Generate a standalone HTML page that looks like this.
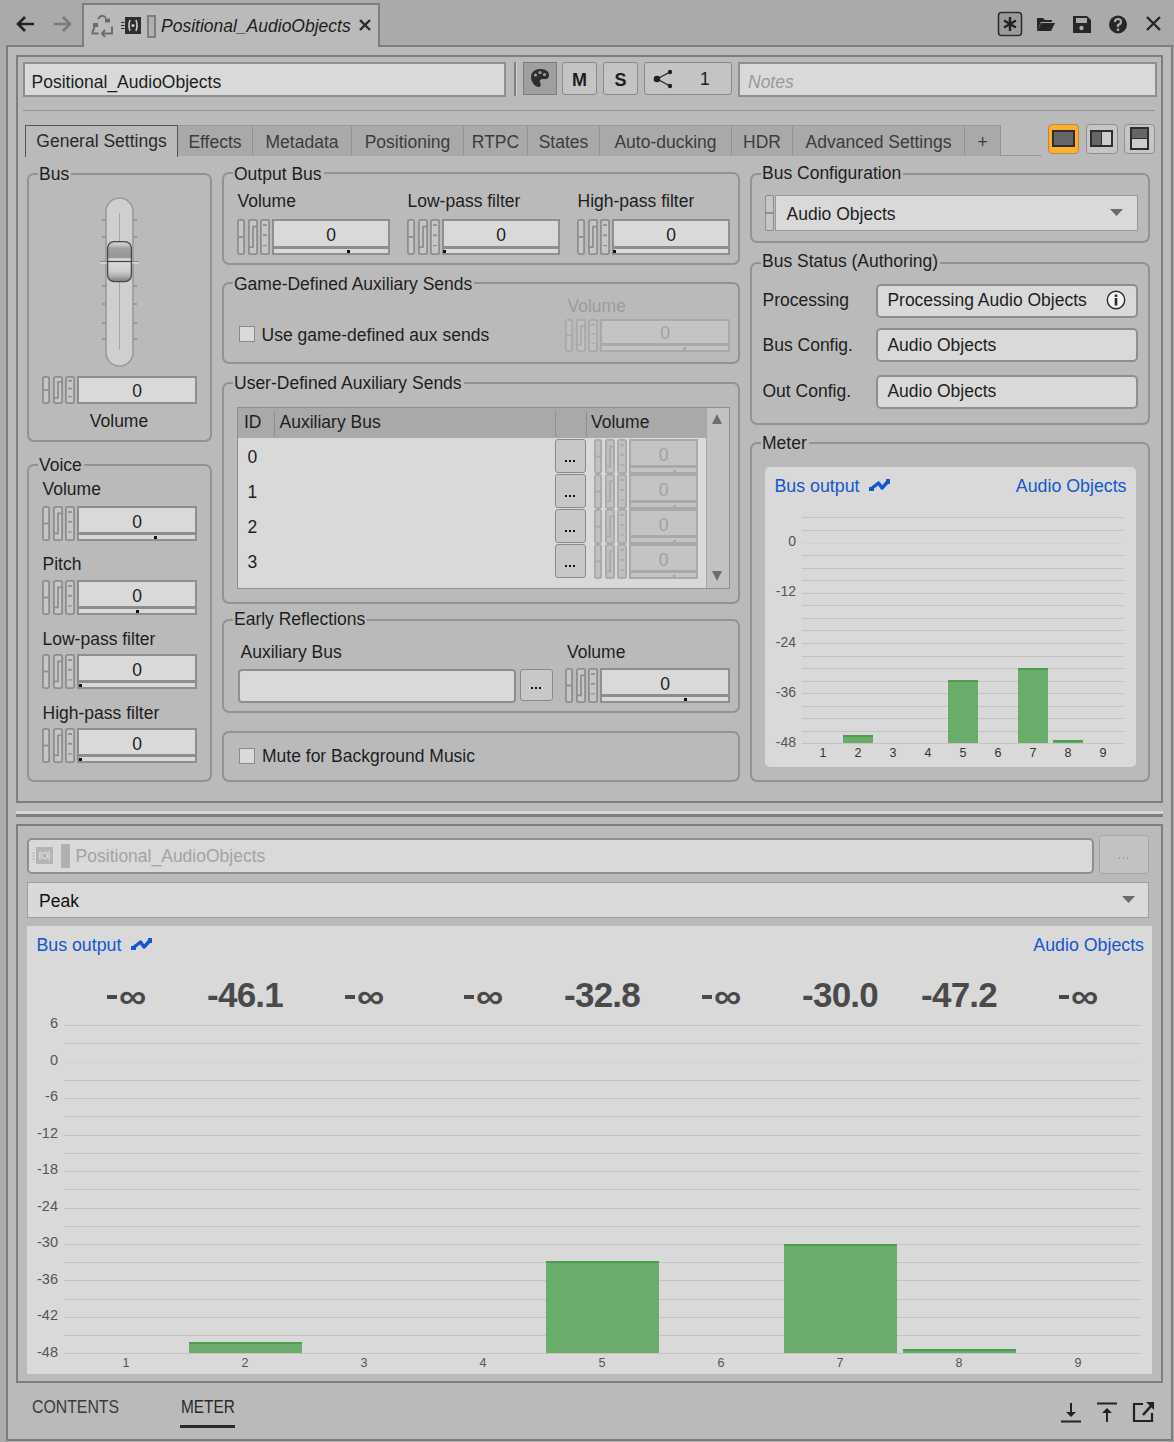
<!DOCTYPE html><html><head><meta charset="utf-8"><style>
*{box-sizing:border-box;margin:0;padding:0}
html,body{width:1174px;height:1442px;overflow:hidden;background:#acacac;font-family:"Liberation Sans",sans-serif;color:#1e1e1e;font-size:17.5px}
.a{position:absolute}
.t{position:absolute;white-space:nowrap;line-height:1}
.pn{position:absolute;background:#bababa;border:2px solid #7e7e7e}
.grp{position:absolute;border:2px solid #929292;border-radius:7px}
.gt{position:absolute;white-space:nowrap;line-height:1;background:#bababa;padding:0 2px 0 1px}
.inp{position:absolute;background:#d9d9d9;border:2px solid #8e8e8e}
.tab{position:absolute;top:125px;height:31px;background:#a9a9a9;border-right:1px solid #939393;border-top:1px solid #9a9a9a}
.tab span{position:absolute;top:8px;left:0;right:0;text-align:center;white-space:nowrap;line-height:1;color:#3c3c3c}
</style></head><body>
<div class="a" style="left:0px;top:0px;width:1174px;height:46px;background:#aaaaaa"></div>
<div class="pn" style="left:6px;top:45px;width:1167px;height:1396px"></div>
<div class="a" style="left:82px;top:3px;width:298px;height:44px;background:#bababa;border:2px solid #7e7e7e;border-bottom:none"></div>
<div class="pn" style="left:16px;top:55px;width:1147px;height:748px"></div>
<div class="a" style="left:16px;top:811px;width:1147px;height:3px;background:#d6d6d6"></div>
<div class="a" style="left:16px;top:814px;width:1147px;height:3px;background:#7e7e7e"></div>
<div class="pn" style="left:16px;top:824px;width:1147px;height:559px"></div>
<div class="a" style="left:23px;top:62px;width:483px;height:35px;background:#d9d9d9;border:2px solid #8e8e8e"></div>
<div class="t" style="left:31.5px;top:73.89px;font-size:17.5px;">Positional_AudioObjects</div>
<div class="a" style="left:738px;top:62px;width:419px;height:35px;background:#d9d9d9;border:2px solid #8e8e8e"></div>
<div class="t" style="left:748px;top:73.89px;font-size:17.5px;color:#9a9a9a;font-style:italic">Notes</div>
<div class="a" style="left:23px;top:110px;width:1132px;height:1px;background:#939393"></div>
<div class="grp" style="left:27px;top:173px;width:185px;height:269px"></div>
<div class="gt" style="left:38px;top:165.69px;font-size:17.5px">Bus</div>
<div class="grp" style="left:27px;top:464px;width:185px;height:318px"></div>
<div class="gt" style="left:38px;top:456.79px;font-size:17.5px">Voice</div>
<div class="grp" style="left:222px;top:172px;width:518px;height:93px"></div>
<div class="gt" style="left:233px;top:165.69px;font-size:17.5px">Output Bus</div>
<div class="grp" style="left:222px;top:282px;width:518px;height:82px"></div>
<div class="gt" style="left:233px;top:276.19px;font-size:17.5px">Game-Defined Auxiliary Sends</div>
<div class="grp" style="left:222px;top:382px;width:518px;height:222px"></div>
<div class="gt" style="left:233px;top:374.59px;font-size:17.5px">User-Defined Auxiliary Sends</div>
<div class="grp" style="left:222px;top:619px;width:518px;height:94px"></div>
<div class="gt" style="left:233px;top:610.99px;font-size:17.5px">Early Reflections</div>
<div class="grp" style="left:222px;top:731px;width:518px;height:51px"></div>
<div class="grp" style="left:750px;top:173px;width:400px;height:70px"></div>
<div class="gt" style="left:761px;top:165.49px;font-size:17.5px">Bus Configuration</div>
<div class="grp" style="left:750px;top:262px;width:400px;height:163px"></div>
<div class="gt" style="left:761px;top:253.39px;font-size:17.5px">Bus Status (Authoring)</div>
<div class="grp" style="left:750px;top:442px;width:400px;height:340px"></div>
<div class="gt" style="left:761px;top:435.19px;font-size:17.5px">Meter</div>
<svg class="a" style="left:14px;top:12px" width="24" height="24" viewBox="0 0 24 24"><path d="M4 12 H20 M11 5 L4 12 L11 19" fill="none" stroke="#222" stroke-width="2.6"/></svg>
<svg class="a" style="left:50px;top:12px" width="24" height="24" viewBox="0 0 24 24"><path d="M4 12 H20 M13 5 L20 12 L13 19" fill="none" stroke="#7a7a7a" stroke-width="2.6"/></svg>
<svg class="a" style="left:86px;top:8px" width="32" height="32" viewBox="0 0 32 32"><g fill="none" stroke="#6c6c6c" stroke-width="2"><path d="M12 11 Q16 5 20 10"/><path d="M8.5 19 L6.5 24 V25.5 H12.5"/><path d="M26 18.5 V25.5 H17"/><path d="M19 22 L16 25.5 L19 29"/></g><g fill="#6c6c6c"><rect x="19" y="10.5" width="5" height="4"/><rect x="7" y="15" width="5" height="4"/></g></svg>
<svg class="a" style="left:121px;top:16px" width="22" height="19" viewBox="0 0 22 19"><rect x="4" y="1" width="16" height="17" fill="#2e2e2e"/><path d="M9 4 Q7 9.5 9 15 M15 4 Q17 9.5 15 15" fill="none" stroke="#c8c8c8" stroke-width="1.6"/><circle cx="12" cy="9.5" r="1.6" fill="#c8c8c8"/><path d="M0 6.5H3.5M0 9.5H3.5M0 12.5H3.5" stroke="#2e2e2e" stroke-width="1.2"/></svg>
<div class="a" style="left:147px;top:15px;width:9px;height:23px;background:#b0b0b0;border:2px solid #7e7e7e"></div>
<div class="t" style="left:161px;top:17.69px;font-size:17.5px;font-style:italic">Positional_AudioObjects</div>
<svg class="a" style="left:358px;top:18px" width="14" height="14" viewBox="0 0 14 14"><path d="M2 2 L12 12 M12 2 L2 12" stroke="#2a2a2a" stroke-width="2.4"/></svg>
<svg class="a" style="left:997px;top:11px" width="26" height="26" viewBox="0 0 26 26"><rect x="1.5" y="1.5" width="23" height="23" rx="3" fill="#9b9b9b" stroke="#2e2e2e" stroke-width="1.6"/><path d="M13 6 V20 M7 9.5 L19 16.5 M19 9.5 L7 16.5" stroke="#222" stroke-width="2.4"/></svg>
<svg class="a" style="left:1036px;top:16px" width="20" height="16" viewBox="0 0 20 16"><path d="M1 2 H7 L9 4 H16 V6 H5 L1 15 Z" fill="#262626"/><path d="M5 7 H19 L15 15 H1 Z" fill="#262626"/></svg>
<svg class="a" style="left:1072px;top:15px" width="20" height="19" viewBox="0 0 20 19"><path d="M1 1 H15 L19 5 V18 H1 Z" fill="#262626"/><rect x="4" y="3" width="11" height="5" fill="#aaaaaa"/><circle cx="9.5" cy="13" r="2.2" fill="#aaaaaa"/></svg>
<svg class="a" style="left:1108px;top:15px" width="20" height="19" viewBox="0 0 20 19"><circle cx="10" cy="9.5" r="9" fill="#262626"/><path d="M7 7 Q7 4 10 4 Q13 4 13 7 Q13 9 10 10 V12" fill="none" stroke="#aaa" stroke-width="2.2"/><rect x="8.8" y="13.5" width="2.4" height="2.4" fill="#aaa"/></svg>
<svg class="a" style="left:1145px;top:15px" width="17" height="17" viewBox="0 0 17 17"><path d="M2 2 L15 15 M15 2 L2 15" stroke="#262626" stroke-width="2.4"/></svg>
<div class="a" style="left:514px;top:62px;width:2px;height:34px;background:#7e7e7e"></div>
<div class="a" style="left:516px;top:62px;width:1px;height:34px;background:#d0d0d0"></div>
<div class="a" style="left:523px;top:62px;width:34px;height:33px;background:#9f9f9f;border:1px solid #7b7b7b"></div>
<svg class="a" style="left:529px;top:67px" width="22" height="22" viewBox="0 0 22 22"><path d="M11 2 C5 2 2 6 2 10 C2 15 6 20 10 20 C12 20 12 17 11 15 C10 13 12 12 14 12 H17 C19 12 20 10 20 8 C20 4 16 2 11 2 Z" fill="#2e2e2e"/><circle cx="6.5" cy="8" r="1.6" fill="#9f9f9f"/><circle cx="11" cy="5.5" r="1.6" fill="#9f9f9f"/><circle cx="15.5" cy="7.5" r="1.6" fill="#9f9f9f"/></svg>
<div class="a" style="left:562px;top:62px;width:35px;height:33px;background:#c4c4c4;border:1px solid #8a8a8a;border-radius:3px"></div>
<div class="t" style="left:562px;width:35px;text-align:center;top:71px;font-size:18px;font-weight:bold;color:#1e1e1e">M</div>
<div class="a" style="left:603px;top:62px;width:35px;height:33px;background:#c4c4c4;border:1px solid #8a8a8a;border-radius:3px"></div>
<div class="t" style="left:603px;width:35px;text-align:center;top:71px;font-size:18px;font-weight:bold;color:#1e1e1e">S</div>
<div class="a" style="left:644px;top:62px;width:88px;height:33px;background:#c4c4c4;border:1px solid #8a8a8a;border-radius:3px"></div>
<svg class="a" style="left:652px;top:68px" width="24" height="22" viewBox="0 0 24 22"><circle cx="5" cy="11" r="3.3" fill="#222"/><circle cx="18" cy="4" r="2.2" fill="#222"/><circle cx="18" cy="18" r="2.2" fill="#222"/><path d="M5 11 L18 4 M5 11 L18 18" stroke="#222" stroke-width="1.3"/></svg>
<div class="t" style="left:700px;top:70.69px;font-size:17.5px;">1</div>
<div class="a" style="left:25px;top:155px;width:1017px;height:1px;background:#9a9a9a"></div>
<div class="tab" style="left:178px;width:75px"><span>Effects</span></div>
<div class="tab" style="left:253px;width:99px"><span>Metadata</span></div>
<div class="tab" style="left:352px;width:112px"><span>Positioning</span></div>
<div class="tab" style="left:464px;width:64px"><span>RTPC</span></div>
<div class="tab" style="left:528px;width:72px"><span>States</span></div>
<div class="tab" style="left:600px;width:132px"><span>Auto-ducking</span></div>
<div class="tab" style="left:732px;width:61px"><span>HDR</span></div>
<div class="tab" style="left:793px;width:172px"><span>Advanced Settings</span></div>
<div class="tab" style="left:965px;width:36px"><span>+</span></div>
<div class="a" style="left:25px;top:125px;width:153px;height:32px;background:#bababa;border:1px solid #555;border-bottom:none"></div>
<div class="t" style="left:-98.5px;width:400px;text-align:center;top:133.19px;font-size:17.5px;color:#2a2a2a;">General Settings</div>
<div class="a" style="left:1048px;top:124px;width:31px;height:30px;background:#fbb034;border:1px solid #b98a3a;border-radius:4px"></div>
<div class="a" style="left:1052px;top:130px;width:23px;height:17px;background:#666;border:2px solid #2e2e2e"></div>
<div class="a" style="left:1086px;top:124px;width:32px;height:30px;background:#c6c6c6;border:1px solid #8e8e8e;border-radius:4px"></div>
<div class="a" style="left:1090px;top:130px;width:23px;height:17px;background:#cdcdcd;border:2px solid #2e2e2e"></div>
<div class="a" style="left:1092px;top:132px;width:10px;height:13px;background:#666"></div>
<div class="a" style="left:1101px;top:132px;width:1px;height:13px;background:#2e2e2e"></div>
<div class="a" style="left:1124px;top:124px;width:31px;height:30px;background:#c6c6c6;border:1px solid #8e8e8e;border-radius:4px"></div>
<div class="a" style="left:1130px;top:127px;width:19px;height:23px;background:#cdcdcd;border:2px solid #2e2e2e"></div>
<div class="a" style="left:1132px;top:129px;width:15px;height:9.5px;background:#666"></div>
<div class="a" style="left:1132px;top:138px;width:15px;height:1.2px;background:#2e2e2e"></div>
<svg class="a" style="left:98px;top:196px" width="44" height="174" viewBox="0 0 44 174"><g stroke="#8e8e8e" stroke-width="1.5"><line x1="4" y1="24" x2="8" y2="24"/><line x1="35" y1="24" x2="39" y2="24"/><line x1="4" y1="41" x2="8" y2="41"/><line x1="35" y1="41" x2="39" y2="41"/><line x1="4" y1="90" x2="8" y2="90"/><line x1="35" y1="90" x2="39" y2="90"/><line x1="4" y1="108" x2="8" y2="108"/><line x1="35" y1="108" x2="39" y2="108"/><line x1="4" y1="127" x2="8" y2="127"/><line x1="35" y1="127" x2="39" y2="127"/><line x1="4" y1="143" x2="8" y2="143"/><line x1="35" y1="143" x2="39" y2="143"/></g><rect x="8" y="2" width="27" height="168" rx="13.5" fill="#cfcfcf" stroke="#9a9a9a" stroke-width="1.6"/><line x1="21.5" y1="17" x2="21.5" y2="154" stroke="#a6a6a6" stroke-width="1"/><defs><linearGradient id="tt" gradientUnits="userSpaceOnUse" x1="0" y1="45.6" x2="0" y2="65.5"><stop offset="0" stop-color="#d2d2d2"/><stop offset="0.18" stop-color="#c4c4c4"/><stop offset="0.32" stop-color="#a2a2a2"/><stop offset="0.8" stop-color="#969696"/><stop offset="0.86" stop-color="#d6d6d6"/><stop offset="1" stop-color="#d6d6d6"/></linearGradient><linearGradient id="tb" gradientUnits="userSpaceOnUse" x1="0" y1="65.5" x2="0" y2="85.6"><stop offset="0" stop-color="#dadada"/><stop offset="0.5" stop-color="#cdcdcd"/><stop offset="0.78" stop-color="#a6a6a6"/><stop offset="1" stop-color="#7a7a7a"/></linearGradient><clipPath id="ct"><rect x="0" y="0" width="44" height="65.5"/></clipPath><clipPath id="cb"><rect x="0" y="65.5" width="44" height="40"/></clipPath></defs><line x1="2" y1="67" x2="41" y2="67" stroke="#ededed" stroke-width="1.2"/><line x1="2" y1="65.5" x2="41" y2="65.5" stroke="#8a8a8a" stroke-width="1.2"/><rect x="9.6" y="45.6" width="23.8" height="40" rx="6.5" fill="url(#tt)" clip-path="url(#ct)"/><rect x="9.6" y="45.6" width="23.8" height="40" rx="6.5" fill="url(#tb)" clip-path="url(#cb)"/><rect x="9.6" y="45.6" width="23.8" height="40" rx="6.5" fill="none" stroke="#4a4a4a" stroke-width="1.3"/><line x1="10" y1="65.5" x2="33" y2="65.5" stroke="#444" stroke-width="1.2"/></svg>
<svg class="a" style="left:42px;top:376px" width="34" height="28" viewBox="0 0 34 28"><rect x="0.9" y="0.9" width="6.2" height="26.2" rx="1.8" fill="#c6c6c6" stroke="#8e8e8e" stroke-width="1.8"/><line x1="1" y1="14.0" x2="7" y2="14.0" stroke="#8e8e8e" stroke-width="1.8"/><rect x="11.9" y="0.9" width="8.2" height="26.2" rx="1.8" fill="#c6c6c6" stroke="#8e8e8e" stroke-width="1.8"/><path d="M12 21.8 H16 V5.9 H20" fill="none" stroke="#8e8e8e" stroke-width="1.8"/><rect x="23.9" y="0.9" width="8.2" height="26.2" rx="1.8" fill="#c6c6c6" stroke="#8e8e8e" stroke-width="1.8"/><line x1="26" y1="4.8" x2="30" y2="4.8" stroke="#8e8e8e" stroke-width="1.8"/><line x1="26" y1="12.6" x2="30" y2="12.6" stroke="#8e8e8e" stroke-width="1.8"/><line x1="26" y1="20.7" x2="30" y2="20.7" stroke="#8e8e8e" stroke-width="1.2"/></svg>
<div class="a" style="left:77px;top:376px;width:120px;height:28px;background:#8e8e8e"></div>
<div class="a" style="left:79px;top:378px;width:116px;height:17px;background:#d9d9d9"></div>
<div class="a" style="left:79px;top:398px;width:116px;height:4px;background:#d9d9d9"></div>
<div class="t" style="left:-63.0px;width:400px;text-align:center;top:379.41px;font-size:17.5px;color:#1e1e1e;">0</div>
<div class="a" style="left:77px;top:376px;width:120px;height:28px;background:#d9d9d9;border:2px solid #8e8e8e"></div>
<div class="t" style="left:-63px;width:400px;text-align:center;top:383.19px;font-size:17.5px;">0</div>
<div class="t" style="left:-81px;width:400px;text-align:center;top:413.19px;font-size:17.5px;">Volume</div>
<div class="t" style="left:42.5px;top:481.49px;font-size:17.5px;">Volume</div>
<svg class="a" style="left:42px;top:506px" width="34" height="35" viewBox="0 0 34 35"><rect x="0.9" y="0.9" width="6.2" height="33.2" rx="1.8" fill="#c6c6c6" stroke="#8e8e8e" stroke-width="1.8"/><line x1="1" y1="17.5" x2="7" y2="17.5" stroke="#8e8e8e" stroke-width="1.8"/><rect x="11.9" y="0.9" width="8.2" height="33.2" rx="1.8" fill="#c6c6c6" stroke="#8e8e8e" stroke-width="1.8"/><path d="M12 27.3 H16 V7.3 H20" fill="none" stroke="#8e8e8e" stroke-width="1.8"/><rect x="23.9" y="0.9" width="8.2" height="33.2" rx="1.8" fill="#c6c6c6" stroke="#8e8e8e" stroke-width="1.8"/><line x1="26" y1="6.0" x2="30" y2="6.0" stroke="#8e8e8e" stroke-width="1.8"/><line x1="26" y1="15.8" x2="30" y2="15.8" stroke="#8e8e8e" stroke-width="1.8"/><line x1="26" y1="25.9" x2="30" y2="25.9" stroke="#8e8e8e" stroke-width="1.2"/></svg>
<div class="a" style="left:77px;top:506px;width:120px;height:35px;background:#8e8e8e"></div>
<div class="a" style="left:79px;top:508px;width:116px;height:24px;background:#d9d9d9"></div>
<div class="a" style="left:79px;top:535px;width:116px;height:4px;background:#d9d9d9"></div>
<div class="a" style="left:154px;top:536px;width:3px;height:3px;background:#111"></div>
<div class="t" style="left:-63.0px;width:400px;text-align:center;top:513.71px;font-size:17.5px;color:#1e1e1e;">0</div>
<div class="t" style="left:42.5px;top:555.59px;font-size:17.5px;">Pitch</div>
<svg class="a" style="left:42px;top:580px" width="34" height="35" viewBox="0 0 34 35"><rect x="0.9" y="0.9" width="6.2" height="33.2" rx="1.8" fill="#c6c6c6" stroke="#8e8e8e" stroke-width="1.8"/><line x1="1" y1="17.5" x2="7" y2="17.5" stroke="#8e8e8e" stroke-width="1.8"/><rect x="11.9" y="0.9" width="8.2" height="33.2" rx="1.8" fill="#c6c6c6" stroke="#8e8e8e" stroke-width="1.8"/><path d="M12 27.3 H16 V7.3 H20" fill="none" stroke="#8e8e8e" stroke-width="1.8"/><rect x="23.9" y="0.9" width="8.2" height="33.2" rx="1.8" fill="#c6c6c6" stroke="#8e8e8e" stroke-width="1.8"/><line x1="26" y1="6.0" x2="30" y2="6.0" stroke="#8e8e8e" stroke-width="1.8"/><line x1="26" y1="15.8" x2="30" y2="15.8" stroke="#8e8e8e" stroke-width="1.8"/><line x1="26" y1="25.9" x2="30" y2="25.9" stroke="#8e8e8e" stroke-width="1.2"/></svg>
<div class="a" style="left:77px;top:580px;width:120px;height:35px;background:#8e8e8e"></div>
<div class="a" style="left:79px;top:582px;width:116px;height:24px;background:#d9d9d9"></div>
<div class="a" style="left:79px;top:609px;width:116px;height:4px;background:#d9d9d9"></div>
<div class="a" style="left:136px;top:610px;width:3px;height:3px;background:#111"></div>
<div class="t" style="left:-63.0px;width:400px;text-align:center;top:587.71px;font-size:17.5px;color:#1e1e1e;">0</div>
<div class="t" style="left:42.5px;top:630.89px;font-size:17.5px;">Low-pass filter</div>
<svg class="a" style="left:42px;top:654px" width="34" height="35" viewBox="0 0 34 35"><rect x="0.9" y="0.9" width="6.2" height="33.2" rx="1.8" fill="#c6c6c6" stroke="#8e8e8e" stroke-width="1.8"/><line x1="1" y1="17.5" x2="7" y2="17.5" stroke="#8e8e8e" stroke-width="1.8"/><rect x="11.9" y="0.9" width="8.2" height="33.2" rx="1.8" fill="#c6c6c6" stroke="#8e8e8e" stroke-width="1.8"/><path d="M12 27.3 H16 V7.3 H20" fill="none" stroke="#8e8e8e" stroke-width="1.8"/><rect x="23.9" y="0.9" width="8.2" height="33.2" rx="1.8" fill="#c6c6c6" stroke="#8e8e8e" stroke-width="1.8"/><line x1="26" y1="6.0" x2="30" y2="6.0" stroke="#8e8e8e" stroke-width="1.8"/><line x1="26" y1="15.8" x2="30" y2="15.8" stroke="#8e8e8e" stroke-width="1.8"/><line x1="26" y1="25.9" x2="30" y2="25.9" stroke="#8e8e8e" stroke-width="1.2"/></svg>
<div class="a" style="left:77px;top:654px;width:120px;height:35px;background:#8e8e8e"></div>
<div class="a" style="left:79px;top:656px;width:116px;height:24px;background:#d9d9d9"></div>
<div class="a" style="left:79px;top:683px;width:116px;height:4px;background:#d9d9d9"></div>
<div class="a" style="left:79px;top:684px;width:3px;height:3px;background:#111"></div>
<div class="t" style="left:-63.0px;width:400px;text-align:center;top:661.71px;font-size:17.5px;color:#1e1e1e;">0</div>
<div class="t" style="left:42.5px;top:704.69px;font-size:17.5px;">High-pass filter</div>
<svg class="a" style="left:42px;top:728px" width="34" height="35" viewBox="0 0 34 35"><rect x="0.9" y="0.9" width="6.2" height="33.2" rx="1.8" fill="#c6c6c6" stroke="#8e8e8e" stroke-width="1.8"/><line x1="1" y1="17.5" x2="7" y2="17.5" stroke="#8e8e8e" stroke-width="1.8"/><rect x="11.9" y="0.9" width="8.2" height="33.2" rx="1.8" fill="#c6c6c6" stroke="#8e8e8e" stroke-width="1.8"/><path d="M12 27.3 H16 V7.3 H20" fill="none" stroke="#8e8e8e" stroke-width="1.8"/><rect x="23.9" y="0.9" width="8.2" height="33.2" rx="1.8" fill="#c6c6c6" stroke="#8e8e8e" stroke-width="1.8"/><line x1="26" y1="6.0" x2="30" y2="6.0" stroke="#8e8e8e" stroke-width="1.8"/><line x1="26" y1="15.8" x2="30" y2="15.8" stroke="#8e8e8e" stroke-width="1.8"/><line x1="26" y1="25.9" x2="30" y2="25.9" stroke="#8e8e8e" stroke-width="1.2"/></svg>
<div class="a" style="left:77px;top:728px;width:120px;height:35px;background:#8e8e8e"></div>
<div class="a" style="left:79px;top:730px;width:116px;height:24px;background:#d9d9d9"></div>
<div class="a" style="left:79px;top:757px;width:116px;height:4px;background:#d9d9d9"></div>
<div class="a" style="left:79px;top:758px;width:3px;height:3px;background:#111"></div>
<div class="t" style="left:-63.0px;width:400px;text-align:center;top:735.71px;font-size:17.5px;color:#1e1e1e;">0</div>
<div class="t" style="left:237.5px;top:192.69px;font-size:17.5px;">Volume</div>
<svg class="a" style="left:237px;top:219px" width="34" height="36" viewBox="0 0 34 36"><rect x="0.9" y="0.9" width="6.2" height="34.2" rx="1.8" fill="#c6c6c6" stroke="#8e8e8e" stroke-width="1.8"/><line x1="1" y1="18.0" x2="7" y2="18.0" stroke="#8e8e8e" stroke-width="1.8"/><rect x="11.9" y="0.9" width="8.2" height="34.2" rx="1.8" fill="#c6c6c6" stroke="#8e8e8e" stroke-width="1.8"/><path d="M12 28.1 H16 V7.6 H20" fill="none" stroke="#8e8e8e" stroke-width="1.8"/><rect x="23.9" y="0.9" width="8.2" height="34.2" rx="1.8" fill="#c6c6c6" stroke="#8e8e8e" stroke-width="1.8"/><line x1="26" y1="6.1" x2="30" y2="6.1" stroke="#8e8e8e" stroke-width="1.8"/><line x1="26" y1="16.2" x2="30" y2="16.2" stroke="#8e8e8e" stroke-width="1.8"/><line x1="26" y1="26.6" x2="30" y2="26.6" stroke="#8e8e8e" stroke-width="1.2"/></svg>
<div class="a" style="left:272px;top:219px;width:118px;height:36px;background:#8e8e8e"></div>
<div class="a" style="left:274px;top:221px;width:114px;height:25px;background:#d9d9d9"></div>
<div class="a" style="left:274px;top:249px;width:114px;height:4px;background:#d9d9d9"></div>
<div class="a" style="left:347px;top:250px;width:3px;height:3px;background:#111"></div>
<div class="t" style="left:131.0px;width:400px;text-align:center;top:227.33px;font-size:17.5px;color:#1e1e1e;">0</div>
<div class="t" style="left:407.5px;top:192.69px;font-size:17.5px;">Low-pass filter</div>
<svg class="a" style="left:407px;top:219px" width="34" height="36" viewBox="0 0 34 36"><rect x="0.9" y="0.9" width="6.2" height="34.2" rx="1.8" fill="#c6c6c6" stroke="#8e8e8e" stroke-width="1.8"/><line x1="1" y1="18.0" x2="7" y2="18.0" stroke="#8e8e8e" stroke-width="1.8"/><rect x="11.9" y="0.9" width="8.2" height="34.2" rx="1.8" fill="#c6c6c6" stroke="#8e8e8e" stroke-width="1.8"/><path d="M12 28.1 H16 V7.6 H20" fill="none" stroke="#8e8e8e" stroke-width="1.8"/><rect x="23.9" y="0.9" width="8.2" height="34.2" rx="1.8" fill="#c6c6c6" stroke="#8e8e8e" stroke-width="1.8"/><line x1="26" y1="6.1" x2="30" y2="6.1" stroke="#8e8e8e" stroke-width="1.8"/><line x1="26" y1="16.2" x2="30" y2="16.2" stroke="#8e8e8e" stroke-width="1.8"/><line x1="26" y1="26.6" x2="30" y2="26.6" stroke="#8e8e8e" stroke-width="1.2"/></svg>
<div class="a" style="left:442px;top:219px;width:118px;height:36px;background:#8e8e8e"></div>
<div class="a" style="left:444px;top:221px;width:114px;height:25px;background:#d9d9d9"></div>
<div class="a" style="left:444px;top:249px;width:114px;height:4px;background:#d9d9d9"></div>
<div class="a" style="left:443px;top:250px;width:3px;height:3px;background:#111"></div>
<div class="t" style="left:301.0px;width:400px;text-align:center;top:227.33px;font-size:17.5px;color:#1e1e1e;">0</div>
<div class="t" style="left:577.5px;top:192.69px;font-size:17.5px;">High-pass filter</div>
<svg class="a" style="left:577px;top:219px" width="34" height="36" viewBox="0 0 34 36"><rect x="0.9" y="0.9" width="6.2" height="34.2" rx="1.8" fill="#c6c6c6" stroke="#8e8e8e" stroke-width="1.8"/><line x1="1" y1="18.0" x2="7" y2="18.0" stroke="#8e8e8e" stroke-width="1.8"/><rect x="11.9" y="0.9" width="8.2" height="34.2" rx="1.8" fill="#c6c6c6" stroke="#8e8e8e" stroke-width="1.8"/><path d="M12 28.1 H16 V7.6 H20" fill="none" stroke="#8e8e8e" stroke-width="1.8"/><rect x="23.9" y="0.9" width="8.2" height="34.2" rx="1.8" fill="#c6c6c6" stroke="#8e8e8e" stroke-width="1.8"/><line x1="26" y1="6.1" x2="30" y2="6.1" stroke="#8e8e8e" stroke-width="1.8"/><line x1="26" y1="16.2" x2="30" y2="16.2" stroke="#8e8e8e" stroke-width="1.8"/><line x1="26" y1="26.6" x2="30" y2="26.6" stroke="#8e8e8e" stroke-width="1.2"/></svg>
<div class="a" style="left:612px;top:219px;width:118px;height:36px;background:#8e8e8e"></div>
<div class="a" style="left:614px;top:221px;width:114px;height:25px;background:#d9d9d9"></div>
<div class="a" style="left:614px;top:249px;width:114px;height:4px;background:#d9d9d9"></div>
<div class="a" style="left:613px;top:250px;width:3px;height:3px;background:#111"></div>
<div class="t" style="left:471.0px;width:400px;text-align:center;top:227.33px;font-size:17.5px;color:#1e1e1e;">0</div>
<div class="a" style="left:239px;top:326px;width:16px;height:16px;background:#d9d9d9;border:1px solid #8a8a8a"></div>
<div class="t" style="left:261.5px;top:326.99px;font-size:17.5px;">Use game-defined aux sends</div>
<div class="t" style="left:567.5px;top:297.69px;font-size:17.5px;color:#9c9c9c;">Volume</div>
<svg class="a" style="left:565px;top:319px" width="34" height="33" viewBox="0 0 34 33"><rect x="0.9" y="0.9" width="6.2" height="31.2" rx="1.8" fill="#c0c0c0" stroke="#a9a9a9" stroke-width="1.8"/><line x1="1" y1="16.5" x2="7" y2="16.5" stroke="#a9a9a9" stroke-width="1.8"/><rect x="11.9" y="0.9" width="8.2" height="31.2" rx="1.8" fill="#c0c0c0" stroke="#a9a9a9" stroke-width="1.8"/><path d="M12 25.7 H16 V6.9 H20" fill="none" stroke="#a9a9a9" stroke-width="1.8"/><rect x="23.9" y="0.9" width="8.2" height="31.2" rx="1.8" fill="#c0c0c0" stroke="#a9a9a9" stroke-width="1.8"/><line x1="26" y1="5.6" x2="30" y2="5.6" stroke="#a9a9a9" stroke-width="1.8"/><line x1="26" y1="14.8" x2="30" y2="14.8" stroke="#a9a9a9" stroke-width="1.8"/><line x1="26" y1="24.4" x2="30" y2="24.4" stroke="#a9a9a9" stroke-width="1.2"/></svg>
<div class="a" style="left:600px;top:319px;width:130px;height:33px;background:#a9a9a9"></div>
<div class="a" style="left:602px;top:321px;width:126px;height:22px;background:#c4c4c4"></div>
<div class="a" style="left:602px;top:346px;width:126px;height:4px;background:#c4c4c4"></div>
<div class="a" style="left:683px;top:347px;width:3px;height:3px;background:#a9a9a9"></div>
<div class="t" style="left:465.0px;width:400px;text-align:center;top:325.48px;font-size:17.5px;color:#a0a0a0;">0</div>
<div class="a" style="left:237px;top:407px;width:493px;height:182px;background:#d9d9d9;border:1px solid #8e8e8e"></div>
<div class="a" style="left:238px;top:408px;width:468px;height:30px;background:#a9a9a9"></div>
<div class="a" style="left:274px;top:411px;width:1px;height:26px;background:#8f8f8f"></div>
<div class="a" style="left:555px;top:411px;width:1px;height:26px;background:#8f8f8f"></div>
<div class="a" style="left:586px;top:411px;width:1px;height:26px;background:#8f8f8f"></div>
<div class="t" style="left:244px;top:414.19px;font-size:17.5px;">ID</div>
<div class="t" style="left:279.5px;top:414.19px;font-size:17.5px;">Auxiliary Bus</div>
<div class="t" style="left:591px;top:414.19px;font-size:17.5px;">Volume</div>
<div class="a" style="left:706px;top:408px;width:23px;height:180px;background:#c2c2c2;border-left:1px solid #a8a8a8"></div>
<svg class="a" style="left:711px;top:413px" width="12" height="12" viewBox="0 0 12 12"><path d="M6 1 L11 11 H1 Z" fill="#6e6e6e"/></svg>
<svg class="a" style="left:711px;top:570px" width="12" height="12" viewBox="0 0 12 12"><path d="M6 11 L11 1 H1 Z" fill="#6e6e6e"/></svg>
<div class="t" style="left:247.5px;top:448.99px;font-size:17.5px;">0</div>
<div class="a" style="left:555px;top:439px;width:31px;height:34px;background:#c8c8c8;border:1px solid #8a8a8a;border-radius:3px"></div>
<div class="a" style="left:565px;top:459.5px;width:2px;height:2px;background:#141414"></div>
<div class="a" style="left:569px;top:459.5px;width:2px;height:2px;background:#141414"></div>
<div class="a" style="left:573px;top:459.5px;width:2px;height:2px;background:#141414"></div>
<svg class="a" style="left:594px;top:439px" width="34" height="35" viewBox="0 0 34 35"><rect x="0.9" y="0.9" width="6.2" height="33.2" rx="1.8" fill="#c0c0c0" stroke="#a9a9a9" stroke-width="1.8"/><line x1="1" y1="17.5" x2="7" y2="17.5" stroke="#a9a9a9" stroke-width="1.8"/><rect x="11.9" y="0.9" width="8.2" height="33.2" rx="1.8" fill="#c0c0c0" stroke="#a9a9a9" stroke-width="1.8"/><path d="M12 27.3 H16 V7.3 H20" fill="none" stroke="#a9a9a9" stroke-width="1.8"/><rect x="23.9" y="0.9" width="8.2" height="33.2" rx="1.8" fill="#c0c0c0" stroke="#a9a9a9" stroke-width="1.8"/><line x1="26" y1="6.0" x2="30" y2="6.0" stroke="#a9a9a9" stroke-width="1.8"/><line x1="26" y1="15.8" x2="30" y2="15.8" stroke="#a9a9a9" stroke-width="1.8"/><line x1="26" y1="25.9" x2="30" y2="25.9" stroke="#a9a9a9" stroke-width="1.2"/></svg>
<div class="a" style="left:629px;top:439px;width:69px;height:35px;background:#a9a9a9"></div>
<div class="a" style="left:631px;top:441px;width:65px;height:24px;background:#c4c4c4"></div>
<div class="a" style="left:631px;top:468px;width:65px;height:4px;background:#c4c4c4"></div>
<div class="t" style="left:463.5px;width:400px;text-align:center;top:446.71px;font-size:17.5px;color:#a0a0a0;">0</div>
<div class="a" style="left:673px;top:470px;width:3px;height:3px;background:#a9a9a9"></div>
<div class="t" style="left:247.5px;top:483.99px;font-size:17.5px;">1</div>
<div class="a" style="left:555px;top:474px;width:31px;height:34px;background:#c8c8c8;border:1px solid #8a8a8a;border-radius:3px"></div>
<div class="a" style="left:565px;top:494.5px;width:2px;height:2px;background:#141414"></div>
<div class="a" style="left:569px;top:494.5px;width:2px;height:2px;background:#141414"></div>
<div class="a" style="left:573px;top:494.5px;width:2px;height:2px;background:#141414"></div>
<svg class="a" style="left:594px;top:474px" width="34" height="35" viewBox="0 0 34 35"><rect x="0.9" y="0.9" width="6.2" height="33.2" rx="1.8" fill="#c0c0c0" stroke="#a9a9a9" stroke-width="1.8"/><line x1="1" y1="17.5" x2="7" y2="17.5" stroke="#a9a9a9" stroke-width="1.8"/><rect x="11.9" y="0.9" width="8.2" height="33.2" rx="1.8" fill="#c0c0c0" stroke="#a9a9a9" stroke-width="1.8"/><path d="M12 27.3 H16 V7.3 H20" fill="none" stroke="#a9a9a9" stroke-width="1.8"/><rect x="23.9" y="0.9" width="8.2" height="33.2" rx="1.8" fill="#c0c0c0" stroke="#a9a9a9" stroke-width="1.8"/><line x1="26" y1="6.0" x2="30" y2="6.0" stroke="#a9a9a9" stroke-width="1.8"/><line x1="26" y1="15.8" x2="30" y2="15.8" stroke="#a9a9a9" stroke-width="1.8"/><line x1="26" y1="25.9" x2="30" y2="25.9" stroke="#a9a9a9" stroke-width="1.2"/></svg>
<div class="a" style="left:629px;top:474px;width:69px;height:35px;background:#a9a9a9"></div>
<div class="a" style="left:631px;top:476px;width:65px;height:24px;background:#c4c4c4"></div>
<div class="a" style="left:631px;top:503px;width:65px;height:4px;background:#c4c4c4"></div>
<div class="t" style="left:463.5px;width:400px;text-align:center;top:481.71px;font-size:17.5px;color:#a0a0a0;">0</div>
<div class="a" style="left:673px;top:505px;width:3px;height:3px;background:#a9a9a9"></div>
<div class="t" style="left:247.5px;top:518.99px;font-size:17.5px;">2</div>
<div class="a" style="left:555px;top:509px;width:31px;height:34px;background:#c8c8c8;border:1px solid #8a8a8a;border-radius:3px"></div>
<div class="a" style="left:565px;top:529.5px;width:2px;height:2px;background:#141414"></div>
<div class="a" style="left:569px;top:529.5px;width:2px;height:2px;background:#141414"></div>
<div class="a" style="left:573px;top:529.5px;width:2px;height:2px;background:#141414"></div>
<svg class="a" style="left:594px;top:509px" width="34" height="35" viewBox="0 0 34 35"><rect x="0.9" y="0.9" width="6.2" height="33.2" rx="1.8" fill="#c0c0c0" stroke="#a9a9a9" stroke-width="1.8"/><line x1="1" y1="17.5" x2="7" y2="17.5" stroke="#a9a9a9" stroke-width="1.8"/><rect x="11.9" y="0.9" width="8.2" height="33.2" rx="1.8" fill="#c0c0c0" stroke="#a9a9a9" stroke-width="1.8"/><path d="M12 27.3 H16 V7.3 H20" fill="none" stroke="#a9a9a9" stroke-width="1.8"/><rect x="23.9" y="0.9" width="8.2" height="33.2" rx="1.8" fill="#c0c0c0" stroke="#a9a9a9" stroke-width="1.8"/><line x1="26" y1="6.0" x2="30" y2="6.0" stroke="#a9a9a9" stroke-width="1.8"/><line x1="26" y1="15.8" x2="30" y2="15.8" stroke="#a9a9a9" stroke-width="1.8"/><line x1="26" y1="25.9" x2="30" y2="25.9" stroke="#a9a9a9" stroke-width="1.2"/></svg>
<div class="a" style="left:629px;top:509px;width:69px;height:35px;background:#a9a9a9"></div>
<div class="a" style="left:631px;top:511px;width:65px;height:24px;background:#c4c4c4"></div>
<div class="a" style="left:631px;top:538px;width:65px;height:4px;background:#c4c4c4"></div>
<div class="t" style="left:463.5px;width:400px;text-align:center;top:516.71px;font-size:17.5px;color:#a0a0a0;">0</div>
<div class="a" style="left:673px;top:540px;width:3px;height:3px;background:#a9a9a9"></div>
<div class="t" style="left:247.5px;top:553.99px;font-size:17.5px;">3</div>
<div class="a" style="left:555px;top:544px;width:31px;height:34px;background:#c8c8c8;border:1px solid #8a8a8a;border-radius:3px"></div>
<div class="a" style="left:565px;top:564.5px;width:2px;height:2px;background:#141414"></div>
<div class="a" style="left:569px;top:564.5px;width:2px;height:2px;background:#141414"></div>
<div class="a" style="left:573px;top:564.5px;width:2px;height:2px;background:#141414"></div>
<svg class="a" style="left:594px;top:544px" width="34" height="35" viewBox="0 0 34 35"><rect x="0.9" y="0.9" width="6.2" height="33.2" rx="1.8" fill="#c0c0c0" stroke="#a9a9a9" stroke-width="1.8"/><line x1="1" y1="17.5" x2="7" y2="17.5" stroke="#a9a9a9" stroke-width="1.8"/><rect x="11.9" y="0.9" width="8.2" height="33.2" rx="1.8" fill="#c0c0c0" stroke="#a9a9a9" stroke-width="1.8"/><path d="M12 27.3 H16 V7.3 H20" fill="none" stroke="#a9a9a9" stroke-width="1.8"/><rect x="23.9" y="0.9" width="8.2" height="33.2" rx="1.8" fill="#c0c0c0" stroke="#a9a9a9" stroke-width="1.8"/><line x1="26" y1="6.0" x2="30" y2="6.0" stroke="#a9a9a9" stroke-width="1.8"/><line x1="26" y1="15.8" x2="30" y2="15.8" stroke="#a9a9a9" stroke-width="1.8"/><line x1="26" y1="25.9" x2="30" y2="25.9" stroke="#a9a9a9" stroke-width="1.2"/></svg>
<div class="a" style="left:629px;top:544px;width:69px;height:35px;background:#a9a9a9"></div>
<div class="a" style="left:631px;top:546px;width:65px;height:24px;background:#c4c4c4"></div>
<div class="a" style="left:631px;top:573px;width:65px;height:4px;background:#c4c4c4"></div>
<div class="t" style="left:463.5px;width:400px;text-align:center;top:551.71px;font-size:17.5px;color:#a0a0a0;">0</div>
<div class="a" style="left:673px;top:575px;width:3px;height:3px;background:#a9a9a9"></div>
<div class="t" style="left:240.5px;top:644.19px;font-size:17.5px;">Auxiliary Bus</div>
<div class="a" style="left:238px;top:669px;width:278px;height:34px;background:#d9d9d9;border:2px solid #8e8e8e;border-radius:4px"></div>
<div class="a" style="left:520px;top:669px;width:33px;height:32px;background:#c8c8c8;border:1px solid #8a8a8a;border-radius:3px"></div>
<div class="a" style="left:531px;top:687px;width:2px;height:2px;background:#141414"></div>
<div class="a" style="left:535px;top:687px;width:2px;height:2px;background:#141414"></div>
<div class="a" style="left:539px;top:687px;width:2px;height:2px;background:#141414"></div>
<div class="t" style="left:567px;top:644.19px;font-size:17.5px;">Volume</div>
<svg class="a" style="left:565px;top:668px" width="34" height="35" viewBox="0 0 34 35"><rect x="0.9" y="0.9" width="6.2" height="33.2" rx="1.8" fill="#c6c6c6" stroke="#8e8e8e" stroke-width="1.8"/><line x1="1" y1="17.5" x2="7" y2="17.5" stroke="#8e8e8e" stroke-width="1.8"/><rect x="11.9" y="0.9" width="8.2" height="33.2" rx="1.8" fill="#c6c6c6" stroke="#8e8e8e" stroke-width="1.8"/><path d="M12 27.3 H16 V7.3 H20" fill="none" stroke="#8e8e8e" stroke-width="1.8"/><rect x="23.9" y="0.9" width="8.2" height="33.2" rx="1.8" fill="#c6c6c6" stroke="#8e8e8e" stroke-width="1.8"/><line x1="26" y1="6.0" x2="30" y2="6.0" stroke="#8e8e8e" stroke-width="1.8"/><line x1="26" y1="15.8" x2="30" y2="15.8" stroke="#8e8e8e" stroke-width="1.8"/><line x1="26" y1="25.9" x2="30" y2="25.9" stroke="#8e8e8e" stroke-width="1.2"/></svg>
<div class="a" style="left:600px;top:668px;width:130px;height:35px;background:#8e8e8e"></div>
<div class="a" style="left:602px;top:670px;width:126px;height:24px;background:#d9d9d9"></div>
<div class="a" style="left:602px;top:697px;width:126px;height:4px;background:#d9d9d9"></div>
<div class="a" style="left:684px;top:698px;width:3px;height:3px;background:#111"></div>
<div class="t" style="left:465.0px;width:400px;text-align:center;top:675.71px;font-size:17.5px;color:#1e1e1e;">0</div>
<div class="a" style="left:239px;top:748px;width:16px;height:16px;background:#d9d9d9;border:1px solid #8a8a8a"></div>
<div class="t" style="left:262px;top:748.49px;font-size:17.5px;">Mute for Background Music</div>
<div class="a" style="left:765px;top:195px;width:9px;height:36px;background:#c6c6c6;border:1.5px solid #8e8e8e;border-radius:2px"></div>
<div class="a" style="left:766px;top:212px;width:7px;height:1.5px;background:#8e8e8e"></div>
<div class="a" style="left:775px;top:195px;width:363px;height:36px;background:#d9d9d9;border:1px solid #9a9a9a"></div>
<div class="t" style="left:786.6px;top:205.79px;font-size:17.5px;">Audio Objects</div>
<svg class="a" style="left:1110px;top:209px" width="13" height="8" viewBox="0 0 13 8"><path d="M0 0 H13 L6.5 7 Z" fill="#6a6a6a"/></svg>
<div class="t" style="left:762.5px;top:292.39px;font-size:17.5px;">Processing</div>
<div class="a" style="left:876px;top:284px;width:262px;height:34px;background:#d9d9d9;border:2px solid #8e8e8e;border-radius:5px"></div>
<div class="t" style="left:887.4px;top:292.39px;font-size:17.5px;">Processing Audio Objects</div>
<div class="t" style="left:762.5px;top:336.69px;font-size:17.5px;">Bus Config.</div>
<div class="a" style="left:876px;top:328px;width:262px;height:34px;background:#d9d9d9;border:2px solid #8e8e8e;border-radius:5px"></div>
<div class="t" style="left:887.4px;top:336.69px;font-size:17.5px;">Audio Objects</div>
<div class="t" style="left:762.5px;top:383.49px;font-size:17.5px;">Out Config.</div>
<div class="a" style="left:876px;top:375px;width:262px;height:34px;background:#d9d9d9;border:2px solid #8e8e8e;border-radius:5px"></div>
<div class="t" style="left:887.4px;top:383.49px;font-size:17.5px;">Audio Objects</div>
<svg class="a" style="left:1106px;top:290px" width="20" height="20" viewBox="0 0 20 20"><circle cx="10" cy="10" r="8.7" fill="#f2f2f2" stroke="#2a2a2a" stroke-width="1.4"/><rect x="8.7" y="8" width="2.6" height="7.5" fill="#2a2a2a"/><rect x="8.7" y="4.5" width="2.6" height="2.4" fill="#2a2a2a"/></svg>
<div class="a" style="left:765px;top:467px;width:371px;height:300px;background:#d9d9d9;border-radius:5px"></div>
<div class="t" style="left:774.5px;top:477.93px;font-size:17.8px;color:#1456d2;">Bus output</div>
<svg class="a" style="left:869px;top:478px" width="22" height="14" viewBox="0 0 22 14"><path d="M2.5 10.5 L9.5 5 L13 10 L19 3.5" fill="none" stroke="#1456d2" stroke-width="3.4" stroke-linejoin="round"/><rect x="0" y="9" width="5" height="4" fill="#1456d2"/><rect x="17" y="1" width="4" height="5" fill="#1456d2"/></svg>
<div class="t" style="left:726.5px;width:400px;text-align:right;top:477.93px;font-size:17.8px;color:#1456d2;">Audio Objects</div>
<div class="a" style="left:802px;top:517px;width:322px;height:1px;background:#c3c3c3"></div><div class="a" style="left:802px;top:530px;width:322px;height:1px;background:#c3c3c3"></div><div class="a" style="left:802px;top:543px;width:322px;height:1px;background:#d2d2d2"></div><div class="a" style="left:802px;top:555px;width:322px;height:1px;background:#c3c3c3"></div><div class="a" style="left:802px;top:568px;width:322px;height:1px;background:#c3c3c3"></div><div class="a" style="left:802px;top:580px;width:322px;height:1px;background:#c3c3c3"></div><div class="a" style="left:802px;top:593px;width:322px;height:1px;background:#c3c3c3"></div><div class="a" style="left:802px;top:605px;width:322px;height:1px;background:#c3c3c3"></div><div class="a" style="left:802px;top:618px;width:322px;height:1px;background:#c3c3c3"></div><div class="a" style="left:802px;top:630px;width:322px;height:1px;background:#c3c3c3"></div><div class="a" style="left:802px;top:643px;width:322px;height:1px;background:#c3c3c3"></div><div class="a" style="left:802px;top:656px;width:322px;height:1px;background:#c3c3c3"></div><div class="a" style="left:802px;top:668px;width:322px;height:1px;background:#c3c3c3"></div><div class="a" style="left:802px;top:681px;width:322px;height:1px;background:#c3c3c3"></div><div class="a" style="left:802px;top:693px;width:322px;height:1px;background:#c3c3c3"></div><div class="a" style="left:802px;top:706px;width:322px;height:1px;background:#c3c3c3"></div><div class="a" style="left:802px;top:718px;width:322px;height:1px;background:#c3c3c3"></div><div class="a" style="left:802px;top:731px;width:322px;height:1px;background:#c3c3c3"></div><div class="a" style="left:802px;top:743px;width:322px;height:1px;background:#c3c3c3"></div>
<div class="t" style="left:396px;width:400px;text-align:right;top:534.16px;font-size:14px;color:#555;">0</div>
<div class="t" style="left:396px;width:400px;text-align:right;top:584.38px;font-size:14px;color:#555;">-12</div>
<div class="t" style="left:396px;width:400px;text-align:right;top:634.60px;font-size:14px;color:#555;">-24</div>
<div class="t" style="left:396px;width:400px;text-align:right;top:684.82px;font-size:14px;color:#555;">-36</div>
<div class="t" style="left:396px;width:400px;text-align:right;top:735.04px;font-size:14px;color:#555;">-48</div>
<div class="t" style="left:623px;width:400px;text-align:center;top:746.92px;font-size:12.5px;color:#333;">1</div>
<div class="t" style="left:658px;width:400px;text-align:center;top:746.92px;font-size:12.5px;color:#333;">2</div>
<div class="t" style="left:693px;width:400px;text-align:center;top:746.92px;font-size:12.5px;color:#333;">3</div>
<div class="t" style="left:728px;width:400px;text-align:center;top:746.92px;font-size:12.5px;color:#333;">4</div>
<div class="t" style="left:763px;width:400px;text-align:center;top:746.92px;font-size:12.5px;color:#333;">5</div>
<div class="t" style="left:798px;width:400px;text-align:center;top:746.92px;font-size:12.5px;color:#333;">6</div>
<div class="t" style="left:833px;width:400px;text-align:center;top:746.92px;font-size:12.5px;color:#333;">7</div>
<div class="t" style="left:868px;width:400px;text-align:center;top:746.92px;font-size:12.5px;color:#333;">8</div>
<div class="t" style="left:903px;width:400px;text-align:center;top:746.92px;font-size:12.5px;color:#333;">9</div>
<div class="a" style="left:843px;top:735.4px;width:30px;height:7.6px;background:#6aad6a;border-top:2px solid #4c9e4c"></div>
<div class="a" style="left:948px;top:679.8px;width:30px;height:63.2px;background:#6aad6a;border-top:2px solid #4c9e4c"></div>
<div class="a" style="left:1018px;top:668.1px;width:30px;height:74.9px;background:#6aad6a;border-top:2px solid #4c9e4c"></div>
<div class="a" style="left:1053px;top:740.1px;width:30px;height:2.9px;background:#6aad6a;border-top:2px solid #4c9e4c"></div>
<div class="a" style="left:27px;top:838px;width:1067px;height:36px;background:#d9d9d9;border:2px solid #8e8e8e;border-radius:5px"></div>
<svg class="a" style="left:32px;top:846px" width="22" height="19" viewBox="0 0 22 19"><rect x="4" y="1" width="17" height="17" fill="#b5b5b5"/><circle cx="12.5" cy="9.5" r="3" fill="none" stroke="#d5d5d5" stroke-width="1.5"/><path d="M8.5 5 Q6.5 9.5 8.5 14 M16.5 5 Q18.5 9.5 16.5 14" fill="none" stroke="#d5d5d5" stroke-width="1.3"/><path d="M0 7H3M0 10H3M0 13H3" stroke="#b5b5b5" stroke-width="1"/></svg>
<div class="a" style="left:61px;top:844px;width:9px;height:24px;background:#b0b0b0"></div>
<div class="t" style="left:75.6px;top:847.89px;font-size:17.5px;color:#a3a3a3;">Positional_AudioObjects</div>
<div class="a" style="left:1099px;top:835px;width:50px;height:39px;background:#c2c2c2;border:1px solid #a5a5a5;border-radius:3px"></div>
<div class="a" style="left:1118.5px;top:857px;width:1.6px;height:1.6px;background:#9c9c9c"></div>
<div class="a" style="left:1122.5px;top:857px;width:1.6px;height:1.6px;background:#9c9c9c"></div>
<div class="a" style="left:1126.5px;top:857px;width:1.6px;height:1.6px;background:#9c9c9c"></div>
<div class="a" style="left:27px;top:882px;width:1122px;height:36px;background:#d9d9d9;border:1px solid #9c9c9c"></div>
<div class="t" style="left:39px;top:892.69px;font-size:17.5px;color:#111;">Peak</div>
<svg class="a" style="left:1122px;top:896px" width="13" height="8" viewBox="0 0 13 8"><path d="M0 0 H13 L6.5 7 Z" fill="#6a6a6a"/></svg>
<div class="a" style="left:27px;top:926px;width:1125px;height:448px;background:#d9d9d9"></div>
<div class="t" style="left:36.4px;top:936.93px;font-size:17.8px;color:#1456d2;">Bus output</div>
<svg class="a" style="left:131px;top:937px" width="22" height="14" viewBox="0 0 22 14"><path d="M2.5 10.5 L9.5 5 L13 10 L19 3.5" fill="none" stroke="#1456d2" stroke-width="3.4" stroke-linejoin="round"/><rect x="0" y="9" width="5" height="4" fill="#1456d2"/><rect x="17" y="1" width="4" height="5" fill="#1456d2"/></svg>
<div class="t" style="left:744px;width:400px;text-align:right;top:936.93px;font-size:17.8px;color:#1456d2;">Audio Objects</div>
<div class="a" style="left:64px;top:1025px;width:1077px;height:1px;background:#c3c3c3"></div><div class="a" style="left:64px;top:1043px;width:1077px;height:1px;background:#c3c3c3"></div><div class="a" style="left:64px;top:1062px;width:1077px;height:1px;background:#d2d2d2"></div><div class="a" style="left:64px;top:1080px;width:1077px;height:1px;background:#c3c3c3"></div><div class="a" style="left:64px;top:1098px;width:1077px;height:1px;background:#c3c3c3"></div><div class="a" style="left:64px;top:1116px;width:1077px;height:1px;background:#c3c3c3"></div><div class="a" style="left:64px;top:1135px;width:1077px;height:1px;background:#c3c3c3"></div><div class="a" style="left:64px;top:1153px;width:1077px;height:1px;background:#c3c3c3"></div><div class="a" style="left:64px;top:1171px;width:1077px;height:1px;background:#c3c3c3"></div><div class="a" style="left:64px;top:1189px;width:1077px;height:1px;background:#c3c3c3"></div><div class="a" style="left:64px;top:1208px;width:1077px;height:1px;background:#c3c3c3"></div><div class="a" style="left:64px;top:1226px;width:1077px;height:1px;background:#c3c3c3"></div><div class="a" style="left:64px;top:1244px;width:1077px;height:1px;background:#c3c3c3"></div><div class="a" style="left:64px;top:1262px;width:1077px;height:1px;background:#c3c3c3"></div><div class="a" style="left:64px;top:1280px;width:1077px;height:1px;background:#c3c3c3"></div><div class="a" style="left:64px;top:1299px;width:1077px;height:1px;background:#c3c3c3"></div><div class="a" style="left:64px;top:1317px;width:1077px;height:1px;background:#c3c3c3"></div><div class="a" style="left:64px;top:1335px;width:1077px;height:1px;background:#c3c3c3"></div><div class="a" style="left:64px;top:1353px;width:1077px;height:1px;background:#c3c3c3"></div>
<div class="t" style="left:-342px;width:400px;text-align:right;top:1016.43px;font-size:14.5px;color:#555;">6</div>
<div class="t" style="left:-342px;width:400px;text-align:right;top:1052.89px;font-size:14.5px;color:#555;">0</div>
<div class="t" style="left:-342px;width:400px;text-align:right;top:1089.36px;font-size:14.5px;color:#555;">-6</div>
<div class="t" style="left:-342px;width:400px;text-align:right;top:1125.83px;font-size:14.5px;color:#555;">-12</div>
<div class="t" style="left:-342px;width:400px;text-align:right;top:1162.30px;font-size:14.5px;color:#555;">-18</div>
<div class="t" style="left:-342px;width:400px;text-align:right;top:1198.77px;font-size:14.5px;color:#555;">-24</div>
<div class="t" style="left:-342px;width:400px;text-align:right;top:1235.23px;font-size:14.5px;color:#555;">-30</div>
<div class="t" style="left:-342px;width:400px;text-align:right;top:1271.70px;font-size:14.5px;color:#555;">-36</div>
<div class="t" style="left:-342px;width:400px;text-align:right;top:1308.17px;font-size:14.5px;color:#555;">-42</div>
<div class="t" style="left:-342px;width:400px;text-align:right;top:1344.64px;font-size:14.5px;color:#555;">-48</div>
<div class="t" style="left:-74px;width:400px;text-align:center;top:1357.42px;font-size:12.5px;color:#555;">1</div>
<div class="t" style="left:45px;width:400px;text-align:center;top:1357.42px;font-size:12.5px;color:#555;">2</div>
<div class="t" style="left:164px;width:400px;text-align:center;top:1357.42px;font-size:12.5px;color:#555;">3</div>
<div class="t" style="left:283px;width:400px;text-align:center;top:1357.42px;font-size:12.5px;color:#555;">4</div>
<div class="t" style="left:402px;width:400px;text-align:center;top:1357.42px;font-size:12.5px;color:#555;">5</div>
<div class="t" style="left:521px;width:400px;text-align:center;top:1357.42px;font-size:12.5px;color:#555;">6</div>
<div class="t" style="left:640px;width:400px;text-align:center;top:1357.42px;font-size:12.5px;color:#555;">7</div>
<div class="t" style="left:759px;width:400px;text-align:center;top:1357.42px;font-size:12.5px;color:#555;">8</div>
<div class="t" style="left:878px;width:400px;text-align:center;top:1357.42px;font-size:12.5px;color:#555;">9</div>
<div class="a" style="left:106.6px;top:994.5px;width:10px;height:4.6px;background:#4a4a4a"></div>
<div class="t" style="left:119px;top:979px;font-size:33px;font-weight:bold;color:#4a4a4a;transform:scale(1.16,1.04);transform-origin:0 0">∞</div>
<div class="t" style="left:45px;width:400px;text-align:center;top:977.37px;font-size:35px;color:#4a4a4a;font-weight:bold;letter-spacing:-0.8px">-46.1</div>
<div class="a" style="left:344.6px;top:994.5px;width:10px;height:4.6px;background:#4a4a4a"></div>
<div class="t" style="left:357px;top:979px;font-size:33px;font-weight:bold;color:#4a4a4a;transform:scale(1.16,1.04);transform-origin:0 0">∞</div>
<div class="a" style="left:463.6px;top:994.5px;width:10px;height:4.6px;background:#4a4a4a"></div>
<div class="t" style="left:476px;top:979px;font-size:33px;font-weight:bold;color:#4a4a4a;transform:scale(1.16,1.04);transform-origin:0 0">∞</div>
<div class="t" style="left:402px;width:400px;text-align:center;top:977.37px;font-size:35px;color:#4a4a4a;font-weight:bold;letter-spacing:-0.8px">-32.8</div>
<div class="a" style="left:701.6px;top:994.5px;width:10px;height:4.6px;background:#4a4a4a"></div>
<div class="t" style="left:714px;top:979px;font-size:33px;font-weight:bold;color:#4a4a4a;transform:scale(1.16,1.04);transform-origin:0 0">∞</div>
<div class="t" style="left:640px;width:400px;text-align:center;top:977.37px;font-size:35px;color:#4a4a4a;font-weight:bold;letter-spacing:-0.8px">-30.0</div>
<div class="t" style="left:759px;width:400px;text-align:center;top:977.37px;font-size:35px;color:#4a4a4a;font-weight:bold;letter-spacing:-0.8px">-47.2</div>
<div class="a" style="left:1058.6px;top:994.5px;width:10px;height:4.6px;background:#4a4a4a"></div>
<div class="t" style="left:1071px;top:979px;font-size:33px;font-weight:bold;color:#4a4a4a;transform:scale(1.16,1.04);transform-origin:0 0">∞</div>
<div class="a" style="left:189px;top:1341.9px;width:113px;height:11.1px;background:#6aad6a;border-top:2px solid #4c9e4c"></div>
<div class="a" style="left:546px;top:1261.0px;width:113px;height:92.0px;background:#6aad6a;border-top:2px solid #4c9e4c"></div>
<div class="a" style="left:784px;top:1244.0px;width:113px;height:109.0px;background:#6aad6a;border-top:2px solid #4c9e4c"></div>
<div class="a" style="left:903px;top:1348.5px;width:113px;height:4.5px;background:#6aad6a;border-top:2px solid #4c9e4c"></div>
<div class="t" style="left:31.5px;top:1398.69px;font-size:17.5px;color:#3a3a3a;transform:scaleX(0.905);transform-origin:0 0">CONTENTS</div>
<div class="t" style="left:180.5px;top:1398.69px;font-size:17.5px;color:#2a2a2a;transform:scaleX(0.88);transform-origin:0 0">METER</div>
<div class="a" style="left:180px;top:1425px;width:55px;height:3px;background:#2a2a2a"></div>
<svg class="a" style="left:1060px;top:1400px" width="100" height="26" viewBox="0 0 100 26"><path d="M11 3 V14" stroke="#222" stroke-width="2"/><path d="M6 12 H16 L11 17 Z" fill="#222"/><path d="M1 21.5 H21" stroke="#222" stroke-width="2"/><path d="M37 3.5 H57" stroke="#222" stroke-width="2"/><path d="M47 11 V22" stroke="#222" stroke-width="2"/><path d="M42 13 H52 L47 8 Z" fill="#222"/><path d="M83 4 H74 V21 H92 V13" fill="none" stroke="#222" stroke-width="2.2"/><path d="M83 15 L91 6" stroke="#222" stroke-width="2.6"/><path d="M86 2 H94 V10 Z" fill="#222"/></svg>
</body></html>
